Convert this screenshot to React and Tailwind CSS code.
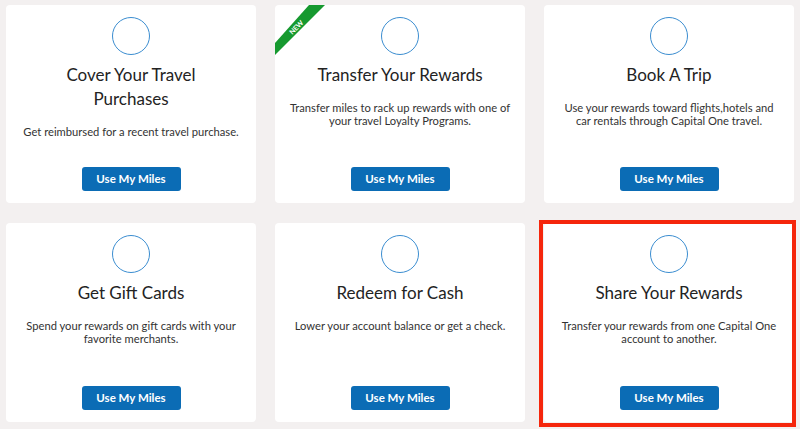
import React from "react";

const cards = [
  { title: "Cover Your Travel Purchases", desc: "Get reimbursed for a recent travel purchase." },
  { title: "Transfer Your Rewards", desc: "Transfer miles to rack up rewards with one of your travel Loyalty Programs.", isNew: true },
  { title: "Book A Trip", desc: "Use your rewards toward flights,hotels and car rentals through Capital One travel." },
  { title: "Get Gift Cards", desc: "Spend your rewards on gift cards with your favorite merchants." },
  { title: "Redeem for Cash", desc: "Lower your account balance or get a check." },
  { title: "Share Your Rewards", desc: "Transfer your rewards from one Capital One account to another.", highlight: true },
];

function Card({ title, desc, isNew, highlight }) {
  return (
    <div className="relative">
      <div className="relative flex h-full flex-col items-center overflow-hidden rounded-[4px] bg-white px-3 pt-3 pb-3 text-center">
        {isNew && (
          <svg className="absolute left-0 top-0" width="56" height="56" viewBox="0 0 56 56">
            <polygon points="34,0 50,0 0,50 0,38" fill="#16992f" />
            <text
              x="21"
              y="25"
              fill="#ffffff"
              fontSize="7"
              fontWeight="700"
              textAnchor="middle"
              transform="rotate(-45 21 22)"
              fontFamily="Lato, 'Liberation Sans', sans-serif"
            >
              NEW
            </text>
          </svg>
        )}
        <div className="h-[38px] w-[38px] shrink-0 rounded-full border-[1.5px] border-[#3b8dd0]" />
        <div className="mt-2 px-3 text-[17px] leading-6 text-[#232323]">{title}</div>
        <div className="mt-[14px] text-[11.2px] leading-[13px] text-[#333333]">{desc}</div>
        <button className="mt-auto flex h-6 w-[99px] items-center justify-center rounded-[3px] bg-[#0b6cb5] text-[11.5px] font-bold text-white">
          Use My Miles
        </button>
      </div>
      {highlight && (
        <div className="pointer-events-none absolute -left-[5px] -top-[3px] -right-[2px] -bottom-[5px] border-4 border-[#f5260c]" />
      )}
    </div>
  );
}

export default function App() {
  return (
    <div
      className="h-[429px] w-[800px] overflow-hidden bg-[#f3f0f0] pl-[6px] pt-[5px]"
      style={{ fontFamily: "Lato, 'Noto Sans', sans-serif" }}
    >
      <div className="grid grid-cols-[250px_250px_250px] grid-rows-[198px_199px] gap-x-[19px] gap-y-[20px]">
        {cards.map((c) => (
          <Card key={c.title} {...c} />
        ))}
      </div>
    </div>
  );
}
